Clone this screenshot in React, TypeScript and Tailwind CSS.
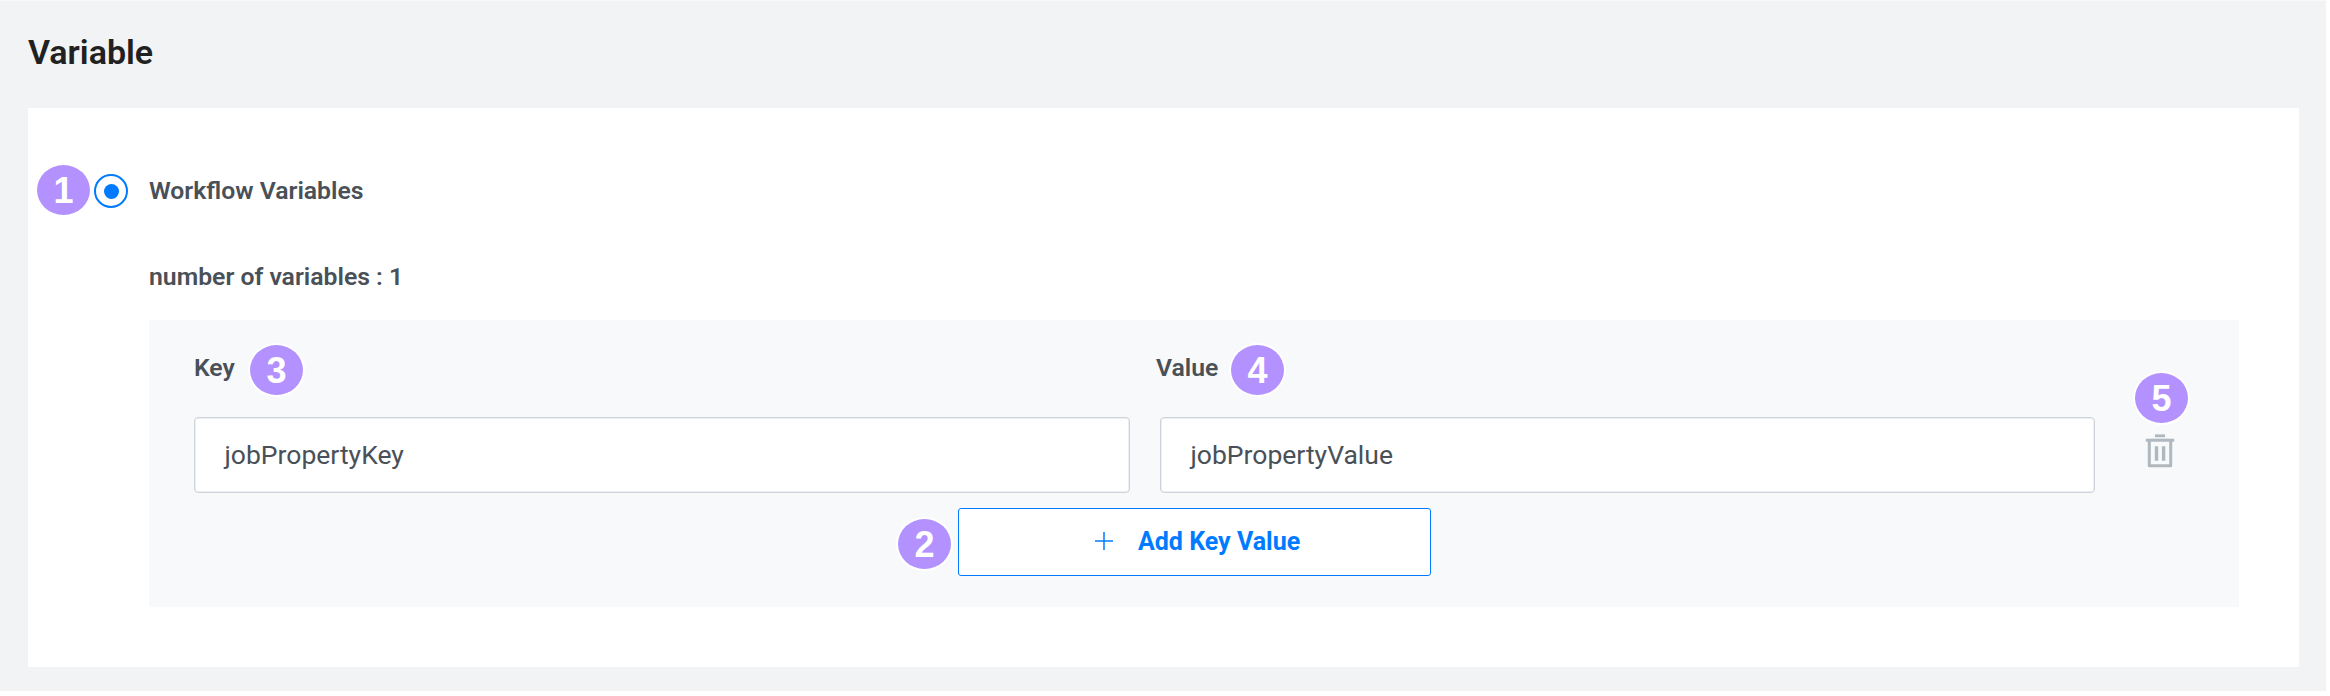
import React from "react";

function Badge({ n, className }: { n: number; className: string }) {
  return (
    <span
      className={`absolute flex h-[50px] w-[53px] items-center justify-center rounded-[50%] bg-[#b392ff] pt-[2px] font-['Liberation_Sans',sans-serif] text-[36px] leading-none font-bold text-white ring-2 ring-white ${className}`}
    >
      {n}
    </span>
  );
}

function Field({ value, className }: { value: string; className: string }) {
  return (
    <div
      className={`flex h-[76px] items-center rounded-[4px] border border-[#ced4da] bg-white pl-[29.5px] text-[26.5px] inset-shadow-[0_0_0_1px_#eceef1] ${className}`}
    >
      {value}
    </div>
  );
}

function TrashIcon() {
  return (
    <svg width="30" height="34" viewBox="0 0 30 34" fill="none" stroke="#b0b8bf" className="mt-[17px] ml-[50px] shrink-0">
      <path d="M10 1.8H20" strokeWidth="2.8" />
      <path d="M0.8 6.2H29.2" strokeWidth="3" />
      <path d="M4.3 6V31.8H25.7V6" strokeWidth="3" strokeLinejoin="round" />
      <path d="M11.5 12.3V26.8M18.6 12.3V26.8" strokeWidth="3.4" />
    </svg>
  );
}

export default function App() {
  return (
    <div className="h-[696px] w-[2330px] overflow-hidden bg-white font-['Roboto',sans-serif] text-[#495057]">
      <main className="h-[691px] w-[2326px] border-t border-[#f8f9fa] bg-[#f1f3f5] pl-7">
        <h1 className="flex h-[107px] items-center pb-[5px] text-[34px] leading-none font-semibold text-[#212121]">Variable</h1>
        <section className="h-[559px] w-[2271px] bg-white pt-[59px] pl-[66px]">
          <label className="relative flex h-12 items-center">
            <Badge n={1} className="-top-[2px] -left-[57px]" />
            <span className="flex size-[34px] items-center justify-center rounded-full border-2 border-[#007bff]">
              <span className="size-[15px] rounded-full bg-[#007bff]" />
            </span>
            <span className="ml-[21px] text-[24.75px] leading-none font-semibold">Workflow Variables</span>
          </label>
          <div className="ml-[55px] w-[2090px]">
            <p className="mt-[47px] flex h-[30px] items-center text-[24.75px] leading-none font-semibold">number of variables : 1</p>
            <div className="mt-[28px] h-[287px] bg-[#f8f9fb] pt-[32px] pl-[45px]">
              <div className="flex h-[65px] text-[24.75px] leading-[32px] font-semibold">
                <div className="relative w-[962px]">
                  Key
                  <Badge n={3} className="-top-[7px] left-[56px]" />
                </div>
                <div className="relative">
                  Value
                  <Badge n={4} className="-top-[7px] left-[75px]" />
                </div>
              </div>
              <div className="relative flex">
                <Field value="jobPropertyKey" className="w-[936px]" />
                <Field value="jobPropertyValue" className="ml-[30px] w-[935px]" />
                <TrashIcon />
                <Badge n={5} className="-top-[44px] left-[1941px]" />
              </div>
              <div className="relative mt-[15px] ml-[764px] w-[473px]">
                <Badge n={2} className="top-[11px] -left-[60px]" />
                <button className="flex h-[68px] w-full items-center rounded-[3px] border border-[#007bff] bg-white pb-[2px] pl-[136px] text-[25px] font-bold text-[#007bff]">
                  <svg width="18" height="20" viewBox="0 0 18 20" stroke="#007bff" strokeWidth="1.5">
                    <path d="M9 1V19M0 10H18" />
                  </svg>
                  <span className="ml-[25px] leading-none">Add Key Value</span>
                </button>
              </div>
            </div>
          </div>
        </section>
      </main>
    </div>
  );
}
